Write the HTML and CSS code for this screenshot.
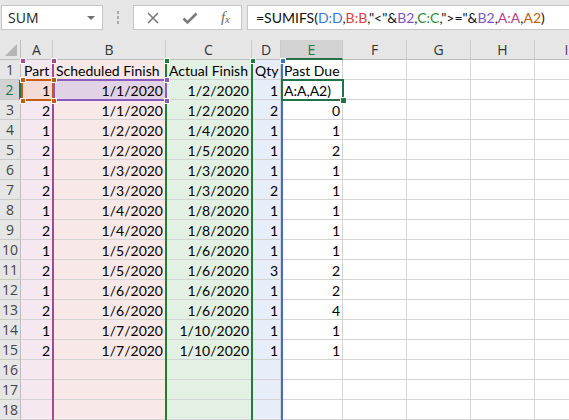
FILE: index.html
```html
<!DOCTYPE html>
<html>
<head>
<meta charset="utf-8">
<link rel="stylesheet" href="styles.css">
</head>
<body>
<div class="toolbar">
  <div class="namebox"><span>SUM</span><span class="dd"></span></div>
  <div class="dots"><i></i><i></i><i></i></div>
  <div class="fbtns">
    <svg class="ic" width="14" height="14" viewBox="0 0 14 14"><path d="M2 2L12 12M12 2L2 12" stroke="#7a7a7a" stroke-width="1.6" fill="none"/></svg>
    <svg class="ic" width="16" height="14" viewBox="0 0 16 14"><path d="M1.5 7.5L5.5 11.5L14.5 2.5" stroke="#7a7a7a" stroke-width="2.6" fill="none"/></svg>
    <span class="fx">f<sub>x</sub></span>
  </div>
  <div class="formula">=SUMIFS(<span class="cb">D:D</span>,<span class="cr">B:B</span>,"&lt;"&amp;<span class="cp">B2</span>,<span class="cg">C:C</span>,"&gt;="&amp;<span class="cp">B2</span>,<span class="cm">A:A</span>,<span class="co">A2</span>)</div>
</div>
<div class="sheet" id="sheet">
  <div class="corner"><span class="tri"></span></div>
  <div class="ch">A</div><div class="ch">B</div><div class="ch">C</div><div class="ch">D</div><div class="ch sel">E</div><div class="ch">F</div><div class="ch">G</div><div class="ch">H</div><div class="ch chi">I</div>
</div>
<script src="app.js"></script>
</body>
</html>
```
FILE: app.js
```js
var rows = [
  ["Part","Scheduled Finish","Actual Finish","Qty","Past Due"],
  ["1","1/1/2020","1/2/2020","1","A:A,A2)"],
  ["2","1/1/2020","1/2/2020","2","0"],
  ["1","1/2/2020","1/4/2020","1","1"],
  ["2","1/2/2020","1/5/2020","1","2"],
  ["1","1/3/2020","1/3/2020","1","1"],
  ["2","1/3/2020","1/3/2020","2","1"],
  ["1","1/4/2020","1/8/2020","1","1"],
  ["2","1/4/2020","1/8/2020","1","1"],
  ["1","1/5/2020","1/6/2020","1","1"],
  ["2","1/5/2020","1/6/2020","3","2"],
  ["1","1/6/2020","1/6/2020","1","2"],
  ["2","1/6/2020","1/6/2020","1","4"],
  ["1","1/7/2020","1/10/2020","1","1"],
  ["2","1/7/2020","1/10/2020","1","1"],
  ["","","","",""],["","","","",""],["","","","",""]
];
var colCls = ["ca","cbb","cc","cd","ce","","","",""];
var sheet = document.getElementById("sheet");
rows.forEach(function(r, i){
  var rh = document.createElement("div");
  rh.className = "rh" + (i === 1 ? " sel" : "");
  rh.textContent = i + 1;
  sheet.appendChild(rh);
  for (var c = 0; c < 9; c++) {
    var d = document.createElement("div");
    var cls = "cell " + colCls[c];
    var v = c < 5 ? r[c] : "";
    if (i > 0 && c < 5 && !(i === 1 && c === 4)) cls += " num";
    if (i === 1 && c === 0) cls += " a2";
    if (i === 1 && c === 1) cls += " b2";
    d.className = cls;
    d.textContent = v;
    sheet.appendChild(d);
  }
});
var ov = [
  ["vline mag", "left:52px;top:20px"],
  ["vline grn", "left:165px;top:20px"],
  ["vline grn", "left:251px;top:20px"],
  ["vline blu", "left:281px;top:20px"],
  ["hdl mag", "left:20px;top:18px"],
  ["hdl mag", "left:51px;top:18px"],
  ["hdl grn", "left:164px;top:18px"],
  ["hdl grn", "left:250px;top:18px"],
  ["hdl blu", "left:280px;top:18px"],
  ["box pur", "left:53px;top:39px;width:114px;height:22px"],
  ["box org", "left:21px;top:39px;width:33px;height:22px"],
  ["hdl pur", "left:164px;top:37px"],
  ["hdl pur", "left:164px;top:58px"],
  ["hdl org", "left:20px;top:37px"],
  ["hdl org", "left:51px;top:37px"],
  ["hdl org", "left:20px;top:58px"],
  ["hdl org", "left:51px;top:58px"],
  ["box act", "left:281px;top:39px;width:63px;height:22px"],
  ["fillh", "left:340px;top:57px"]
];
ov.forEach(function(o){
  var d = document.createElement("div");
  d.className = o[0];
  d.setAttribute("style", o[1]);
  sheet.appendChild(d);
});
```
FILE: styles.css
```css
html, body { margin: 0; padding: 0; }
body {
  width: 569px; height: 420px; overflow: hidden;
  background: #e6e6e6;
  font-family: "Lato", "Liberation Sans", sans-serif;
}
.toolbar {
  height: 40px; box-sizing: border-box;
  display: flex; align-items: flex-start;
  padding: 5px 0 0 1px;
}
.toolbar > * { flex-shrink: 0; }
.namebox {
  width: 102px; height: 25px; box-sizing: border-box;
  background: #fff; border: 1px solid #c6c6c6;
  display: flex; align-items: center; justify-content: space-between;
  padding: 0 7px 0 6px;
  font-family: "Open Sans", sans-serif; font-size: 14px; color: #222;
}
.dd { width: 0; height: 0; border-left: 4px solid transparent; border-right: 4px solid transparent; border-top: 4px solid #6f6f6f; }
.dots { width: 30px; height: 25px; display: flex; flex-direction: column; align-items: center; justify-content: center; gap: 2px; }
.dots i { width: 2px; height: 3px; background: #a9a9a9; display: block; }
.fbtns {
  width: 109px; height: 25px; box-sizing: border-box;
  background: #fff; border: 1px solid #c6c6c6;
  display: flex; align-items: center; justify-content: space-between;
  padding: 0 11px 0 12px;
}
.fx { font-family: "Liberation Serif", serif; font-style: italic; color: #666; font-size: 15px; }
.fx sub { font-size: 11px; vertical-align: -1px; }
.formula {
  margin-left: 5px; width: 340px; height: 25px; box-sizing: border-box;
  background: #fff; border: 1px solid #c6c6c6; border-right: none;
  font-size: 14px; line-height: 23px; padding-left: 8px; color: #111; white-space: nowrap;
}
.cb { color: #3b78d0; }
.cr { color: #d9403b; }
.cp { color: #8850c4; }
.cg { color: #1f8a3c; }
.cm { color: #b1408c; }
.co { color: #c55a11; }

.sheet {
  position: relative;
  display: grid;
  grid-template-columns: 21px 32px 113px 86px 29px 62px 64px 64px 64px 64px;
  grid-auto-rows: 20px;
  width: 569px;
  overflow: hidden;
  background: #fff;
}
.corner { background: #e6e6e6; border-right: 1px solid #bdbdbd; border-bottom: 1px solid #bdbdbd; position: relative; }
.tri { position: absolute; right: 3px; bottom: 3px; width: 0; height: 0; border-left: 12px solid transparent; border-bottom: 12px solid #b5b5b5; }
.ch {
  background: #e6e6e6; border-right: 1px solid #cacaca; border-bottom: 1px solid #bdbdbd;
  text-align: center; font-family: "Open Sans", sans-serif; font-size: 14px; line-height: 20px; color: #333;
}
.ch.chi { color: #6b2c6b; }
.ch.sel { background: #d2d2d2; color: #217346; border-bottom: 2px solid #217346; }
.rh {
  background: #e6e6e6; border-right: 1px solid #bdbdbd; border-bottom: 1px solid #cacaca;
  text-align: center; font-family: "Open Sans", sans-serif; font-size: 14px; line-height: 20px; color: #444;
}
.rh.sel { background: #d2d2d2; color: #217346; border-right: 2px solid #217346; }
.cell {
  box-sizing: border-box;
  border-right: 1px solid #d4d4d4; border-bottom: 1px solid #d4d4d4;
  font-size: 14px; line-height: 21px; padding: 0 2px 0 3px; color: #000;
  white-space: nowrap; overflow: visible;
}
.cell.num { text-align: right; }
.ca { background: #f6e8f0; }
.cbb { background: #f9e8e8; }
.cc { background: #e3f1e4; }
.cd { background: #e7eef9; }
.cell.a2 { background: #f4dbd6; }
.cell.b2 { background: #e2d2e6; }
.vline { position: absolute; width: 2px; bottom: 0; }
.vline.mag { background: #a8488e; }
.vline.grn { background: #1e7e34; }
.vline.blu { background: #3a73c6; }
.hdl { position: absolute; width: 4px; height: 4px; border: 1px solid #fff; }
.hdl.mag { background: #a8488e; }
.hdl.grn { background: #1e7e34; }
.hdl.blu { background: #3a73c6; }
.hdl.pur { background: #8a5bbf; }
.hdl.org { background: #c55a11; }
.box { position: absolute; box-sizing: border-box; border: 2px solid; }
.box.pur { border-color: #8a5bbf; }
.box.org { border-color: #c55a11; }
.box.act { border-color: #217346; }
.fillh { position: absolute; width: 5px; height: 5px; background: #217346; border: 1px solid #fff; }
```
